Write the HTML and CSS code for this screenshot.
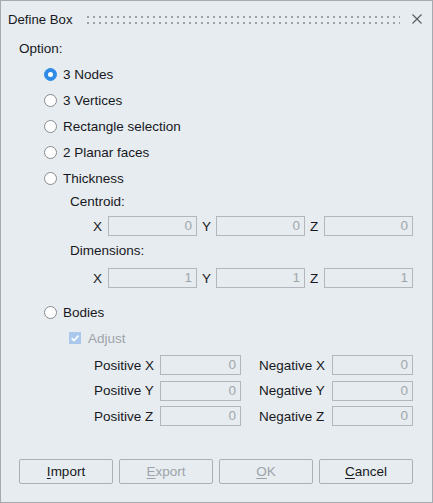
FILE: index.html
```html
<!DOCTYPE html>
<html>
<head>
<meta charset="utf-8">
<link rel="stylesheet" href="styles.css">
</head>
<body>
<div class="dialog">
  <div class="titlebar">
    <span class="title">Define Box</span>
    <span class="grip"><svg width="100%" height="8"><defs><pattern id="dots" width="6" height="6" patternUnits="userSpaceOnUse"><rect x="0" y="0" width="2" height="2" fill="#9ca1a6"/></pattern></defs><rect width="100%" height="8" fill="url(#dots)"/></svg></span>
    <span class="close"><svg width="10" height="10" viewBox="0 0 10 10"><path d="M0.5 0.5L9.5 9.5M9.5 0.5L0.5 9.5" stroke="#55595e" stroke-width="1.1" fill="none"/></svg></span>
  </div>
  <div class="content">
    <div class="group-label">Option:</div>
    <div class="options">
      <div class="radio-row first"><span class="radio checked"></span><span>3 Nodes</span></div>
      <div class="radio-row"><span class="radio"></span><span>3 Vertices</span></div>
      <div class="radio-row"><span class="radio"></span><span>Rectangle selection</span></div>
      <div class="radio-row"><span class="radio"></span><span>2 Planar faces</span></div>
      <div class="radio-row"><span class="radio"></span><span>Thickness</span></div>
      <div class="sub">
        <div class="sub-label first">Centroid:</div>
        <div class="xyz">
          <span class="axis">X</span><span class="field">0</span>
          <span class="axis pad">Y</span><span class="field">0</span>
          <span class="axis pad">Z</span><span class="field">0</span>
        </div>
        <div class="sub-label second">Dimensions:</div>
        <div class="xyz second">
          <span class="axis">X</span><span class="field">1</span>
          <span class="axis pad">Y</span><span class="field">1</span>
          <span class="axis pad">Z</span><span class="field">1</span>
        </div>
      </div>
      <div class="radio-row bodies"><span class="radio"></span><span>Bodies</span></div>
      <div class="check-row"><span class="checkbox"><svg width="12" height="12" viewBox="0 0 12 12"><path d="M2.6 6.2L5 8.5L9.5 3.6" stroke="#ffffff" stroke-width="1.6" fill="none"/></svg></span><span class="disabled">Adjust</span></div>
      <div class="offsets">
        <span>Positive X</span><span class="field">0</span><span></span><span>Negative X</span><span class="field">0</span>
        <span>Positive Y</span><span class="field">0</span><span></span><span>Negative Y</span><span class="field">0</span>
        <span>Positive Z</span><span class="field">0</span><span></span><span>Negative Z</span><span class="field">0</span>
      </div>
    </div>
  </div>
  <div class="buttons">
    <span class="btn"><u>I</u>mport</span>
    <span class="btn disabled"><u>E</u>xport</span>
    <span class="btn disabled"><u>O</u>K</span>
    <span class="btn"><u>C</u>ancel</span>
  </div>
</div>
</body>
</html>
```
FILE: styles.css
```css
html, body {
  margin: 0;
  padding: 0;
  background: #e6ecf0;
}
body {
  font-family: "Liberation Sans", Arial, sans-serif;
  font-size: 13.5px;
  color: #181822;
}
.dialog {
  width: 433px;
  height: 503px;
  box-sizing: border-box;
  border: 1px solid #a4aaaf;
  background: #e6ecf0;
  display: flex;
  flex-direction: column;
}
.titlebar {
  height: 37px;
  display: flex;
  align-items: center;
  padding-left: 7px;
  padding-right: 10px;
}
.title {
  font-size: 13.2px;
  line-height: 16px;
}
.grip {
  flex: 1;
  margin-left: 14px;
  margin-right: 12px;
  height: 8px;
  display: flex;
}
.close {
  width: 10px;
  height: 10px;
  display: flex;
  margin-top: -2px;
}
.content {
  flex: 1;
  padding-top: 1px;
  padding-left: 18px;
}
.group-label {
  height: 20px;
  line-height: 20px;
}
.options {
  padding-left: 25px;
}
.radio-row {
  height: 26px;
  display: flex;
  align-items: center;
}
.radio-row.first {
  margin-top: 2px;
}
.radio-row.bodies {
  margin-top: 11px;
}
.radio {
  width: 13px;
  height: 13px;
  box-sizing: border-box;
  border-radius: 50%;
  border: 1px solid #868b90;
  background: #ffffff;
  margin-right: 6px;
  flex: none;
  position: relative;
}
.radio.checked {
  background: #2f8ce6;
  border-color: #2f8ce6;
}
.radio.checked::after {
  content: "";
  position: absolute;
  left: 3px;
  top: 3px;
  width: 5px;
  height: 5px;
  border-radius: 50%;
  background: #ffffff;
}
.sub {
  padding-left: 26px;
}
.sub-label {
  height: 20px;
  line-height: 20px;
}
.sub-label.first {
  margin-top: 1px;
}
.sub-label.second {
  margin-top: 5px;
}
.xyz {
  margin-top: 4px;
  margin-left: 23px;
  display: grid;
  grid-template-columns: 15px 89px 19px 89px 19px 89px;
  height: 20px;
  align-items: center;
}
.xyz.second {
  margin-top: 7px;
}
.axis.pad {
  padding-left: 5px;
}
.field {
  height: 20px;
  box-sizing: border-box;
  border: 1px solid #b3b7bb;
  background: #e6ecf0;
  color: #a2a7ac;
  text-align: right;
  padding-right: 4px;
  line-height: 18px;
}
.check-row {
  height: 26px;
  display: flex;
  align-items: center;
  padding-left: 25px;
}
.checkbox {
  width: 12px;
  height: 12px;
  background: #a9c8eb;
  margin-right: 7px;
  display: flex;
  flex: none;
}
.disabled {
  color: #9ea3a9;
}
.offsets {
  margin-top: 4px;
  margin-left: 50px;
  display: grid;
  grid-template-columns: 66px 81px 18px 73px 81px;
  grid-auto-rows: 20px;
  row-gap: 5.5px;
  align-items: center;
}
.buttons {
  display: flex;
  gap: 6px;
  padding-left: 18px;
  padding-bottom: 18px;
}
.btn {
  width: 94px;
  height: 25px;
  box-sizing: border-box;
  border: 1px solid #abb0b5;
  border-radius: 2px;
  display: flex;
  align-items: center;
  justify-content: center;
}
.btn u {
  text-decoration-thickness: 1px;
  text-underline-offset: 2px;
}
```
